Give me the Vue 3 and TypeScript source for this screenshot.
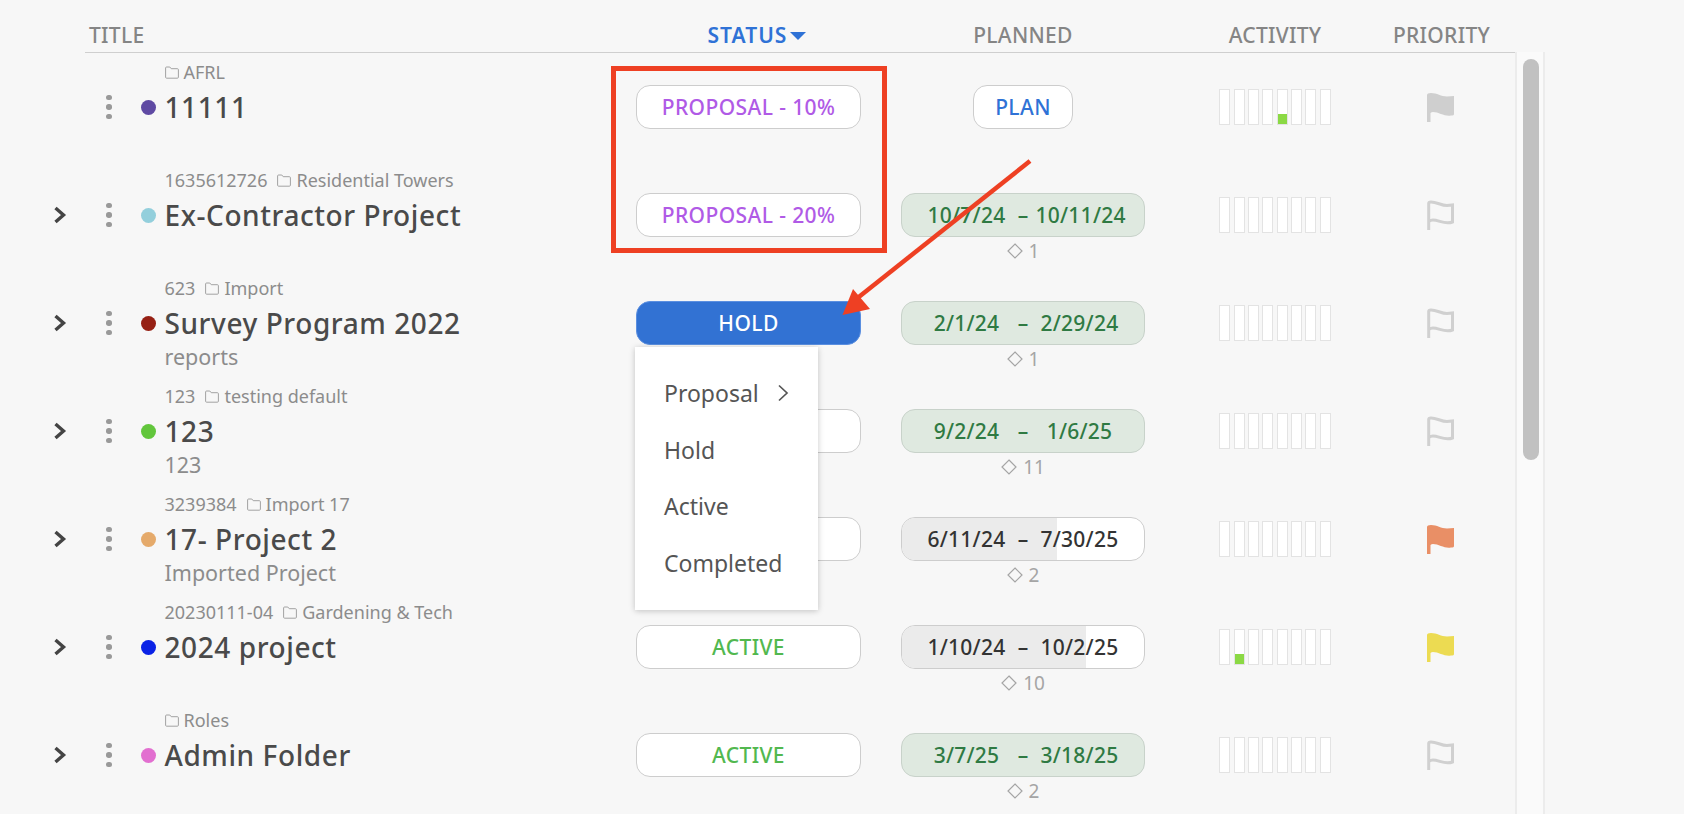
<script setup lang="ts">
interface Row {
  name: string
  code?: string
  folder: string
  desc?: string
  color: string
  chevron: boolean
  status: string
  statusKind: 'purple' | 'hold' | 'green'
  plan?: boolean
  start?: string
  end?: string
  fill?: number
  count?: number
  bar?: number
  flag: 'solid' | 'outline' | 'orange' | 'yellow'
}

const rows: Row[] = [
  { name: '11111', folder: 'AFRL', color: '#5f4aa3', chevron: false, status: 'PROPOSAL - 10%', statusKind: 'purple', plan: true, bar: 4, flag: 'solid' },
  { name: 'Ex-Contractor Project', code: '1635612726', folder: 'Residential Towers', color: '#93cfdc', chevron: true, status: 'PROPOSAL - 20%', statusKind: 'purple', start: '10/7/24', end: '10/11/24', count: 1, flag: 'outline' },
  { name: 'Survey Program 2022', code: '623', folder: 'Import', desc: 'reports', color: '#962014', chevron: true, status: 'HOLD', statusKind: 'hold', start: '2/1/24', end: '2/29/24', count: 1, flag: 'outline' },
  { name: '123', code: '123', folder: 'testing default', desc: '123', color: '#62c63c', chevron: true, status: '', statusKind: 'green', start: '9/2/24', end: '1/6/25', count: 11, flag: 'outline' },
  { name: '17- Project 2', code: '3239384', folder: 'Import 17', desc: 'Imported Project', color: '#e5aa6b', chevron: true, status: '', statusKind: 'green', start: '6/11/24', end: '7/30/25', fill: 64, count: 2, flag: 'orange' },
  { name: '2024 project', code: '20230111-04', folder: 'Gardening & Tech', color: '#0a22e6', chevron: true, status: 'ACTIVE', statusKind: 'green', start: '1/10/24', end: '10/2/25', fill: 76, count: 10, bar: 1, flag: 'yellow' },
  { name: 'Admin Folder', folder: 'Roles', color: '#e26fd0', chevron: true, status: 'ACTIVE', statusKind: 'green', start: '3/7/25', end: '3/18/25', count: 2, flag: 'outline' },
]

const slots = [0, 1, 2, 3, 4, 5, 6, 7]
const menu = ['Proposal', 'Hold', 'Active', 'Completed']
</script>

<template>
  <div class="page">
    <div class="table">
      <div class="head">
        <div class="h-title">TITLE</div>
        <div class="h-cell h-status">STATUS<span class="caret"></span></div>
        <div class="h-cell">PLANNED</div>
        <div class="h-cell">ACTIVITY</div>
        <div class="h-cell">PRIORITY</div>
      </div>

      <div v-for="r in rows" :key="r.name" class="row">
        <div class="left">
          <div class="chev-box">
            <svg v-if="r.chevron" width="14" height="18" viewBox="0 0 14 18">
              <path d="M2.5 2 L10.5 9 L2.5 16" fill="none" stroke="#444" stroke-width="3.4" />
            </svg>
          </div>
          <div class="kebab"><i></i><i></i><i></i></div>
          <span class="dot" :style="{ background: r.color }"></span>
          <div class="info">
            <div class="meta">
              <span v-if="r.code" class="code">{{ r.code }}</span>
              <svg class="folder" width="14" height="13" viewBox="0 0 14 13">
                <path d="M.6 11.2V2q0-1 1-1h3.2l1.4 1.7h6.2q1 0 1 1v7.5q0 1-1 1H1.6q-1 0-1-1Z" fill="none" stroke="#a2a2a2" stroke-width="1" />
              </svg>
              <span>{{ r.folder }}</span>
            </div>
            <div class="name">{{ r.name }}</div>
            <div class="desc">{{ r.desc }}</div>
          </div>
        </div>

        <div class="status" :class="r.statusKind">{{ r.status }}</div>

        <div class="planned">
          <div class="plan-top"></div>
          <div v-if="r.plan" class="plan-btn">PLAN</div>
          <div v-else class="dates" :class="{ running: r.fill }">
            <span v-if="r.fill" class="fill" :style="{ width: r.fill + '%' }"></span>
            <span class="d">{{ r.start }}</span>
            <span class="dash">–</span>
            <span class="d">{{ r.end }}</span>
          </div>
          <div class="count">
            <template v-if="r.count">
              <svg width="16" height="16" viewBox="0 0 16 16">
                <path d="M8 1 L15 8 L8 15 L1 8 Z" fill="none" stroke="#a5a5a5" stroke-width="1.2" />
              </svg>
              <span>{{ r.count }}</span>
            </template>
          </div>
        </div>

        <div class="activity">
          <div v-for="s in slots" :key="s" class="bar">
            <span v-if="r.bar === s" class="lvl"></span>
          </div>
        </div>

        <div class="priority">
          <svg width="27" height="30" viewBox="0 0 27 30">
            <path
              v-if="r.flag === 'outline'"
              d="M1.7 30V3.5Q1.7 2 4 2C10 2 14 5.5 20 5.5L25.5 5V22C18 25 12 20 6 20Q3.5 20 1.7 21.5"
              fill="none"
              stroke="#d0d0d0"
              stroke-width="3"
            />
            <path
              v-else
              d="M0 30V3Q0 1 4 1C10 1 14 4.500 20 4.500L27 4V22Q27 23.500 24 23.500C18 25 12 20 6 20Q4.500 20 3.500 21V30Z"
              :class="'flag-' + r.flag"
            />
          </svg>
        </div>
      </div>
    </div>

    <div class="track"><div class="thumb"></div></div>

    <div class="menu">
      <div v-for="m in menu" :key="m" class="item">
        <span>{{ m }}</span>
        <svg v-if="m === 'Proposal'" width="12" height="18" viewBox="0 0 12 18">
          <path d="M2 1.500 L10 9 L2 16.500" fill="none" stroke="#555" stroke-width="1.700" />
        </svg>
      </div>
    </div>

    <div class="redbox"></div>
    <svg class="arrow" width="1684" height="814" viewBox="0 0 1684 814">
      <path d="M1030 161 L855 300" stroke="#ee4023" stroke-width="4.500" fill="none" />
      <path d="M842.500 315 L853 289 L870 309 Z" fill="#ee4023" />
    </svg>
  </div>
</template>

<style>
html,
body {
  margin: 0;
  background: #f7f7f7;
  overflow: hidden;
}
</style>

<style scoped>
.page {
  position: relative;
  width: 1684px;
  height: 814px;
  overflow: hidden;
  display: flex;
  background: #f7f7f7;
  font-family: "Noto Sans", "Open Sans", sans-serif;
  color: #4a4a4a;
}
.table {
  width: 1515px;
  flex: none;
}
.head {
  display: grid;
  grid-template-columns: 551px 225px 324px 180px 153px;
  margin-left: 85px;
  width: 1433px;
  height: 52px;
  border-bottom: 1px solid #cfcfcf;
  font-size: 21px;
  letter-spacing: 0.3px;
  font-weight: 500;
  color: #858585;
  align-items: center;
}
.head > div {
  line-height: 70px;
  height: 52px;
}
.h-title {
  padding-left: 4px;
}
.h-cell {
  text-align: center;
}
.h-status {
  color: #2f72d6;
  font-weight: 600;
  letter-spacing: 1px;
  padding-left: 17px;
}
.caret {
  display: inline-block;
  margin-left: 3px;
  vertical-align: 3px;
  border-left: 8px solid transparent;
  border-right: 8px solid transparent;
  border-top: 8px solid #2f72d6;
}
.row {
  display: grid;
  grid-template-columns: 636px 225px 324px 180px 150px;
  height: 108px;
  align-items: center;
}
.left {
  display: flex;
  align-items: center;
  height: 100%;
}
.chev-box {
  width: 14px;
  height: 18px;
  margin-left: 53px;
  flex: none;
}
.kebab {
  width: 5.500px;
  margin-left: 39px;
  flex: none;
  display: flex;
  flex-direction: column;
  gap: 3.900px;
}
.kebab i {
  display: block;
  width: 5.500px;
  height: 5.500px;
  border-radius: 50%;
  background: #999;
}
.dot {
  width: 15px;
  height: 15px;
  border-radius: 50%;
  margin-left: 29px;
  flex: none;
}
.info {
  margin-left: 9px;
  height: 100%;
  display: grid;
  grid-template-rows: 1fr auto 1fr;
  white-space: nowrap;
}
.meta {
  align-self: end;
  display: flex;
  align-items: center;
  font-size: 18px;
  line-height: 24px;
  color: #8c8c8c;
  margin-bottom: 4px;
}
.code {
  margin-right: 10px;
}
.folder {
  margin-right: 5px;
  flex: none;
}
.name {
  font-size: 28px;
  line-height: 38px;
  letter-spacing: 0.58px;
  font-weight: 500;
  color: #4a4a4a;
}
.desc {
  font-size: 21.500px;
  line-height: 28px;
  color: #8c8c8c;
  margin-top: 1px;
}
.status {
  width: 225px;
  height: 44px;
  box-sizing: border-box;
  border: 1px solid #cdcdcd;
  border-radius: 14px;
  background: #fff;
  text-align: center;
  line-height: 42px;
  font-size: 21px;
  letter-spacing: 0.4px;
  font-weight: 500;
}
.purple {
  color: #b05ae6;
}
.green {
  color: #52b84f;
}
.hold {
  background: #3272d3;
  border-color: #5b8fe0;
  color: #fff;
}
.planned {
  height: 100%;
  display: grid;
  grid-template-rows: 1fr auto 1fr;
  justify-items: center;
}
.plan-btn {
  width: 100px;
  height: 44px;
  box-sizing: border-box;
  border: 1px solid #cdcdcd;
  border-radius: 14px;
  background: #fff;
  color: #2f72d6;
  text-align: center;
  line-height: 42px;
  font-size: 21px;
  letter-spacing: 0.4px;
  font-weight: 500;
}
.dates {
  position: relative;
  width: 244px;
  height: 44px;
  box-sizing: border-box;
  border: 1px solid #c8d2ca;
  border-radius: 14px;
  background: #dfe9e0;
  color: #2f7a43;
  display: flex;
  justify-content: center;
  line-height: 42px;
  font-size: 21px;
  letter-spacing: 0.25px;
  font-weight: 500;
  overflow: hidden;
}
.running {
  background: #fff;
  border-color: #cdcdcd;
  color: #333;
}
.fill {
  position: absolute;
  left: 0;
  top: 0;
  bottom: 0;
  background: #ebebeb;
}
.d {
  position: relative;
  width: 88px;
  text-align: center;
}
.dash {
  position: relative;
  width: 25px;
  text-align: center;
}
.count {
  display: flex;
  align-items: center;
  justify-content: center;
  gap: 6px;
  height: 24px;
  margin-top: 2px;
  font-size: 19px;
  color: #a5a5a5;
}
.activity {
  display: flex;
  justify-content: center;
  gap: 3.300px;
}
.bar {
  position: relative;
  width: 11px;
  height: 36px;
  box-sizing: border-box;
  border: 1px solid #e3e3e3;
  background: #fff;
}
.lvl {
  position: absolute;
  left: 0;
  right: 0;
  bottom: 0;
  height: 10px;
  background: #8bd944;
}
.priority {
  display: flex;
  justify-content: center;
}
.flag-solid {
  fill: #cfcfcf;
}
.flag-orange {
  fill: #e98f66;
}
.flag-yellow {
  fill: #ecdb52;
}
.track {
  width: 26px;
  flex: none;
  margin-top: 52px;
  background: #fafafa;
  border-left: 2px solid #ececec;
  border-right: 2px solid #ececec;
  padding-top: 7px;
}
.thumb {
  width: 16px;
  height: 401px;
  margin-left: 6px;
  border-radius: 8px;
  background: #c1c1c1;
}
.menu {
  position: absolute;
  left: 635px;
  top: 347px;
  width: 183px;
  height: 263px;
  box-sizing: border-box;
  padding: 18px 0;
  background: #fff;
  box-shadow: 0 1px 6px rgba(0, 0, 0, 0.22);
  font-size: 23px;
  color: #555;
}
.item {
  display: flex;
  align-items: center;
  gap: 18px;
  height: 56.500px;
  padding-left: 29px;
}
.redbox {
  position: absolute;
  left: 611px;
  top: 66px;
  width: 276px;
  height: 187px;
  box-sizing: border-box;
  border: 5px solid #ee4023;
}
.arrow {
  position: absolute;
  left: 0;
  top: 0;
  pointer-events: none;
}
</style>
